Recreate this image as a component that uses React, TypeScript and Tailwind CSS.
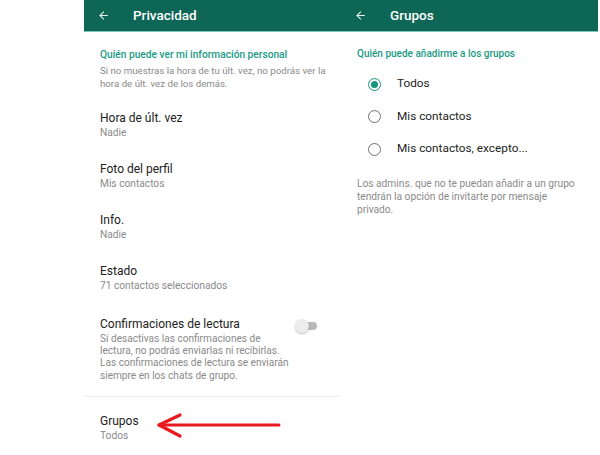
import { useState } from "react";

const font = { fontFamily: "Roboto, 'Liberation Sans', sans-serif" };

function BackArrow() {
  return (
    <svg width="13" height="13" viewBox="0 0 24 24" className="shrink-0">
      <path d="M20 11H7.83l5.59-5.59L12 4l-8 8 8 8 1.41-1.41L7.83 13H20v-2z" fill="#e6f2ef" />
    </svg>
  );
}

function Header({ title, titleGap, pad }: { title: string; titleGap: string; pad: string }) {
  return (
    <div className={`h-[32px] bg-[#0d6656] border-b border-[#7fc4b8] flex items-center ${pad}`}>
      <BackArrow />
      <span className={`${titleGap} text-[13.5px] text-white font-medium`}>{title}</span>
    </div>
  );
}

const privacyItems = [
  { label: "Hora de últ. vez", value: "Nadie" },
  { label: "Foto del perfil", value: "Mis contactos" },
  { label: "Info.", value: "Nadie" },
  { label: "Estado", value: "71 contactos seleccionados" },
];

const groupOptions = ["Todos", "Mis contactos", "Mis contactos, excepto..."];

export default function App() {
  const [selected, setSelected] = useState(0);

  return (
    <div className="relative w-[600px] h-[455px] bg-white flex overflow-hidden" style={font}>
      <div className="w-[84px] shrink-0" />

      {/* Privacidad */}
      <div className="w-[256px] shrink-0 flex flex-col">
        <Header title="Privacidad" titleGap="ml-[23px]" pad="pl-[13px]" />
        <div className="pl-[16px] pr-[12px] pt-[16px]">
          <div className="text-[10.2px] font-medium text-[#1a9a85] leading-[13px]">
            Quién puede ver mi información personal
          </div>
          <div className="mt-[4px] text-[9.7px] text-[#8a8a8a] leading-[12.5px]">
            Si no muestras la hora de tu últ. vez, no podrás ver la hora de últ. vez de los demás.
          </div>
        </div>

        <div className="pl-[16px] pr-[12px] pt-[20px] flex flex-col gap-[21px]">
          {privacyItems.map((item) => (
            <div key={item.label}>
              <div className="text-[12px] text-[#222] leading-[16px]">{item.label}</div>
              <div className="text-[10.2px] text-[#8a8a8a] leading-[14px]">{item.value}</div>
            </div>
          ))}
        </div>

        <div className="pl-[16px] pr-[23px] pt-[23px] pb-[14px] flex">
          <div className="w-[194px]">
            <div className="text-[12px] text-[#222] leading-[16px]">Confirmaciones de lectura</div>
            <div className="mt-[1px] text-[10.1px] text-[#8a8a8a] leading-[12.2px]">
              Si desactivas las confirmaciones de lectura, no podrás enviarlas ni recibirlas. Las
              confirmaciones de lectura se enviarán siempre en los chats de grupo.
            </div>
          </div>
          <div className="relative w-[22px] h-[14px] mt-[3px] ml-auto shrink-0 flex items-center">
            <div className="w-[19px] h-[8px] ml-[3px] rounded-full bg-[#b9b9b9]" />
            <div className="absolute left-0 top-0 w-[14px] h-[14px] rounded-full bg-[#ececec] shadow-[0_1px_2px_rgba(0,0,0,0.25)]" />
          </div>
        </div>

        <div className="h-px bg-[#ededed]" />

        <div className="pl-[16px] pt-[16px]">
          <div className="text-[12px] text-[#222] leading-[16px]">Grupos</div>
          <div className="text-[10.2px] text-[#8a8a8a] leading-[14px]">Todos</div>
        </div>
      </div>

      {/* Grupos */}
      <div className="w-[258px] shrink-0 flex flex-col">
        <Header title="Grupos" titleGap="ml-[23px]" pad="pl-[14px]" />
        <div className="pl-[17px] pt-[15px]">
          <div className="text-[10px] font-medium text-[#1a9a85] leading-[13px]">
            Quién puede añadirme a los grupos
          </div>
          <div className="mt-[8px] flex flex-col">
            {groupOptions.map((opt, i) => (
              <button
                key={opt}
                onClick={() => setSelected(i)}
                className="h-[32.5px] flex items-center pl-[11px] text-left"
              >
                <span
                  className={`w-[13px] h-[13px] rounded-full border-[1.5px] flex items-center justify-center ${
                    selected === i ? "border-[#159480]" : "border-[#6f6f6f]"
                  }`}
                >
                  {selected === i && <span className="w-[7px] h-[7px] rounded-full bg-[#159480]" />}
                </span>
                <span className="ml-[16px] text-[11.8px] text-[#222]">{opt}</span>
              </button>
            ))}
          </div>
          <div className="mt-[11px] w-[223px] text-[10.2px] text-[#8a8a8a] leading-[13px]">
            Los admins. que no te puedan añadir a un grupo tendrán la opción de invitarte por mensaje
            privado.
          </div>
        </div>
      </div>

      {/* flecha roja */}
      <svg className="absolute left-[153px] top-[409px]" width="132" height="34" viewBox="0 0 132 34">
        <path d="M6 16 L126 16" stroke="#e8191f" strokeWidth="3" strokeLinecap="round" />
        <path d="M27 6 L6 16 L27 27" stroke="#e8191f" strokeWidth="3.2" fill="none" strokeLinecap="round" strokeLinejoin="round" />
      </svg>
    </div>
  );
}
